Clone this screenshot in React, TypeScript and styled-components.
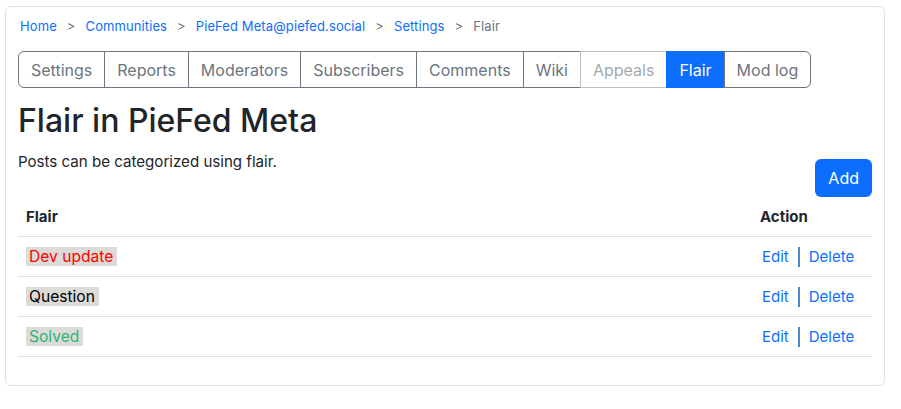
import React, {FC} from 'react';
import styled, {createGlobalStyle} from 'styled-components';

const GlobalStyle = createGlobalStyle`
    html, body {
        margin: 0;
        padding: 0;
        background: #ffffff;
    }

    body {
        font-family: Inter, "Noto Sans", "Liberation Sans", sans-serif;
        color: #212529;
    }
`;

interface Flair {
    name: string;
    color: string;
}

const TABS = ['Settings', 'Reports', 'Moderators', 'Subscribers', 'Comments', 'Wiki', 'Appeals', 'Flair', 'Mod log'];

const FLAIRS: Flair[] = [
    {name: 'Dev update', color: '#ff0000'},
    {name: 'Question', color: '#000000'},
    {name: 'Solved', color: '#2fb373'},
];

const App: FC = () => {
    return (
        <>
            <GlobalStyle/>
            <Page>
                <Card>
                    <Breadcrumb>
                        <Crumb href='#'>{'Home'}</Crumb>
                        <Sep>{'>'}</Sep>
                        <Crumb href='#'>{'Communities'}</Crumb>
                        <Sep>{'>'}</Sep>
                        <Crumb href='#'>{'PieFed Meta@piefed.social'}</Crumb>
                        <Sep>{'>'}</Sep>
                        <Crumb href='#'>{'Settings'}</Crumb>
                        <Sep>{'>'}</Sep>
                        <Current>{'Flair'}</Current>
                    </Breadcrumb>
                    <TabGroup>
                        {TABS.map((tab) => (
                            <Tab
                                key={tab}
                                $active={tab === 'Flair'}
                                $disabled={tab === 'Appeals'}
                            >
                                {tab}
                            </Tab>
                        ))}
                    </TabGroup>
                    <Title>{'Flair in PieFed Meta'}</Title>
                    <IntroRow>
                        <Intro>{'Posts can be categorized using flair.'}</Intro>
                        <AddButton>{'Add'}</AddButton>
                    </IntroRow>
                    <Table>
                        <thead>
                            <tr>
                                <Th>{'Flair'}</Th>
                                <Th $action={true}>{'Action'}</Th>
                            </tr>
                        </thead>
                        <tbody>
                            {FLAIRS.map((flair) => (
                                <tr key={flair.name}>
                                    <Td>
                                        <Badge $color={flair.color}>{flair.name}</Badge>
                                    </Td>
                                    <Td $action={true}>
                                        <ActionLink href='#'>{'Edit'}</ActionLink>
                                        <Divider/>
                                        <ActionLink href='#'>{'Delete'}</ActionLink>
                                    </Td>
                                </tr>
                            ))}
                        </tbody>
                    </Table>
                </Card>
            </Page>
        </>
    );
};

const Page = styled.div`
    padding: 6px 16px 24px 5px;
`;

const Card = styled.div`
    width: 880px;
    box-sizing: border-box;
    border: 1px solid #dee2e6;
    border-radius: 6px;
    padding: 12px 12px 28px 12px;
`;

const Breadcrumb = styled.nav`
    display: flex;
    align-items: center;
    height: 14px;
    margin-left: 2px;
    font-size: 13px;
    letter-spacing: 0.1px;
`;

const Crumb = styled.a`
    color: #0d6efd;
    text-decoration: none;
`;

const Current = styled.span`
    color: #6c757d;
`;

const Sep = styled.span`
    padding: 0 10px;
    color: #6c757d;
`;

const TabGroup = styled.div`
    display: inline-flex;
    margin-top: 18px;
`;

const Tab = styled.button<{$active?: boolean; $disabled?: boolean}>`
    height: 37px;
    padding: 0 12px;
    margin-left: -1px;
    font-family: inherit;
    font-size: 16px;
    line-height: 1.5;
    background: ${(p) => (p.$active ? '#0d6efd' : '#ffffff')};
    color: ${(p) => {
        if (p.$active) {
            return '#ffffff';
        }
        return p.$disabled ? 'rgba(108, 117, 125, 0.65)' : '#6c757d';
    }};
    border: 1px solid ${(p) => {
        if (p.$active) {
            return '#0d6efd';
        }
        return p.$disabled ? 'rgba(108, 117, 125, 0.45)' : '#6c757d';
    }};
    cursor: pointer;

    &:first-child {
        margin-left: 0;
        border-radius: 6px 0 0 6px;
    }

    &:last-child {
        border-radius: 0 6px 6px 0;
    }
`;

const Title = styled.h1`
    margin: 14px 0 0 0;
    font-size: 32px;
    font-weight: 500;
    line-height: 1.2;
`;

const IntroRow = styled.div`
    display: flex;
    justify-content: space-between;
    align-items: flex-start;
    margin-top: 9px;
`;

const Intro = styled.p`
    margin: 2px 0 0 0;
    font-size: 15.1px;
    line-height: 22px;
`;

const AddButton = styled.button`
    margin-top: 10px;
    height: 38px;
    padding: 0 13px;
    border: none;
    border-radius: 6px;
    background: #0d6efd;
    color: #ffffff;
    font-family: inherit;
    font-size: 16px;
    cursor: pointer;
`;

const Table = styled.table`
    width: 100%;
    margin-top: 0;
    border-collapse: collapse;
    font-size: 15px;
`;

const Th = styled.th<{$action?: boolean}>`
    height: 39px;
    padding: 0 8px;
    text-align: left;
    font-weight: 700;
    border-bottom: 1px solid #dee2e6;
    width: ${(p) => (p.$action ? '104px' : 'auto')};
`;

const Td = styled.td<{$action?: boolean}>`
    height: 39px;
    padding: 0 8px 0 ${(p) => (p.$action ? '10px' : '8px')};
    border-bottom: 1px solid #dee2e6;
    white-space: nowrap;
`;

const Badge = styled.span<{$color: string}>`
    display: inline-block;
    padding: 0 4px 0 3px;
    font-size: 15.6px;
    line-height: 19px;
    background: #dddbd7;
    color: ${(p) => p.$color};
`;

const ActionLink = styled.a`
    color: #0d6efd;
    text-decoration: none;
`;

const Divider = styled.span`
    display: inline-block;
    width: 2px;
    height: 20px;
    margin: 0 9px;
    vertical-align: -5px;
    background: #4f88c6;
`;

export default App;
